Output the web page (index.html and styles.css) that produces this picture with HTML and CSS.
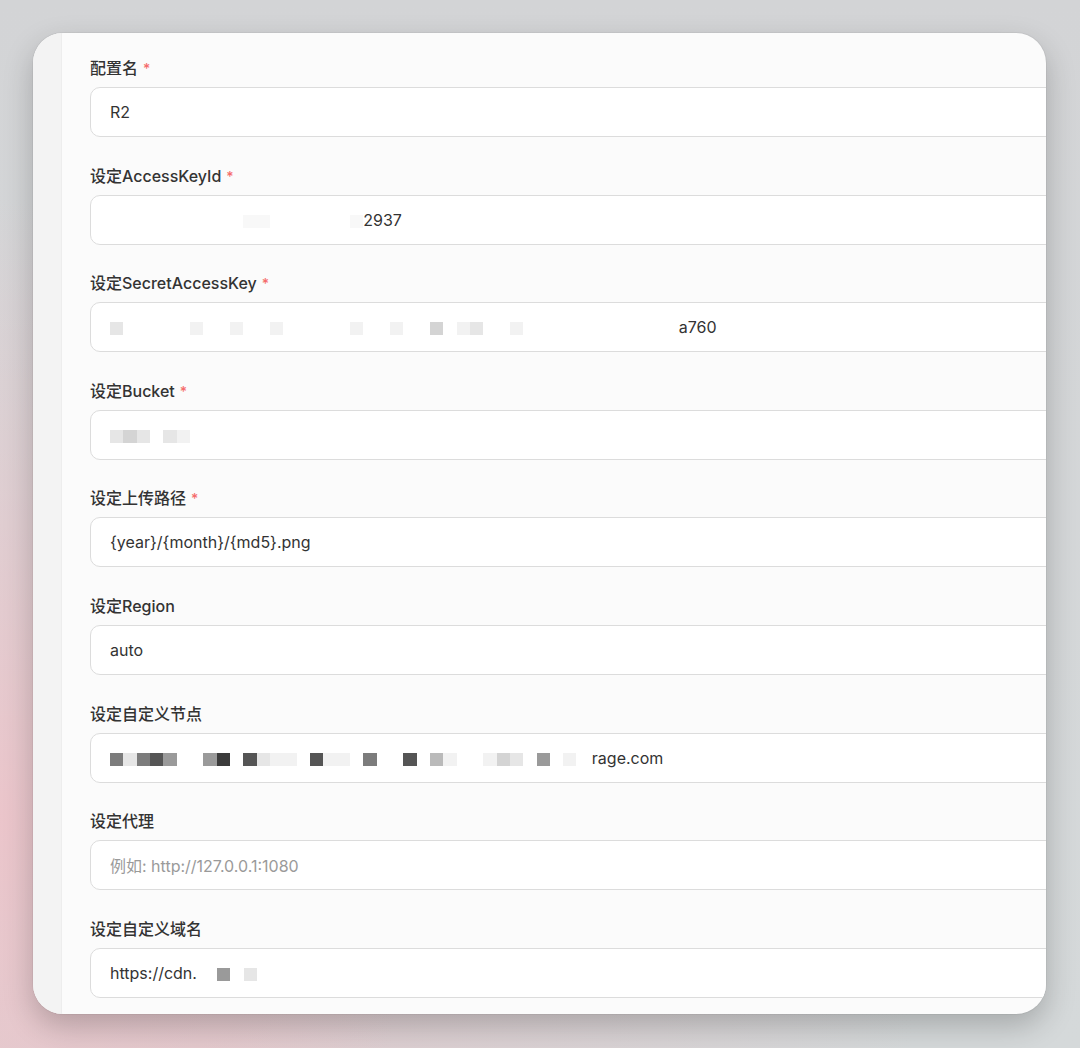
FILE: index.html
```html
<!DOCTYPE html>
<html lang="zh-CN">
<head>
<meta charset="UTF-8" />
<meta name="viewport" content="width=device-width, initial-scale=1" />
<title>R2 配置</title>
<link rel="stylesheet" href="styles.css">
</head>
<body>

<div class="window">
  <div class="sidebar"></div>

  <div class="main">
    <div class="form-item">
      <div class="label">配置名<span class="req">*</span></div>
      <div class="field">R2</div>
    </div>

    <div class="form-item">
      <div class="label">设定AccessKeyId<span class="req">*</span></div>
      <div class="field">
        <span class="mosaic">
          <i></i><i></i><i></i><i></i><i></i><i></i><i></i><i></i><i></i><i></i>
          <i class="c0"></i><i class="c0"></i><i></i><i></i><i></i><i></i><i></i><i></i>
          <i class="c0"></i>
        </span>2937
      </div>
    </div>

    <div class="form-item">
      <div class="label">设定SecretAccessKey<span class="req">*</span></div>
      <div class="field">
        <span class="mosaic">
          <i class="c2"></i><i></i><i></i><i></i><i></i><i></i>
          <i class="c1"></i><i></i><i></i><i class="c1"></i><i></i><i></i>
          <i class="c1"></i><i></i><i></i><i></i><i></i><i></i>
          <i class="c1"></i><i></i><i></i><i class="c1"></i><i></i><i></i>
          <i class="c3"></i><i></i><i class="c1"></i><i class="c2"></i><i></i><i></i>
          <i class="c1"></i><i></i><i></i><i></i><i></i><i></i>
          <i></i><i></i><i></i><i></i><i></i><i></i>
        </span><span class="tail wide">a760</span>
      </div>
    </div>

    <div class="form-item">
      <div class="label">设定Bucket<span class="req">*</span></div>
      <div class="field">
        <span class="mosaic">
          <i class="c2"></i><i class="c3"></i><i class="c2"></i><i></i><i class="c2"></i><i class="c1"></i>
        </span>
      </div>
    </div>

    <div class="form-item">
      <div class="label">设定上传路径<span class="req">*</span></div>
      <div class="field">{year}/{month}/{md5}.png</div>
    </div>

    <div class="form-item">
      <div class="label">设定Region</div>
      <div class="field">auto</div>
    </div>

    <div class="form-item">
      <div class="label">设定自定义节点</div>
      <div class="field">
        <span class="mosaic">
          <i class="c6"></i><i class="c2"></i><i class="c6"></i><i class="c7"></i><i class="c5"></i><i></i>
          <i></i><i class="c5"></i><i class="c8"></i><i></i><i class="c7"></i><i class="c2"></i>
          <i class="c1"></i><i class="c1"></i><i></i><i class="c7"></i><i class="c1"></i><i class="c1"></i>
          <i></i><i class="c6"></i><i></i><i></i><i class="c7"></i><i></i>
          <i class="c4"></i><i class="c1"></i><i></i><i></i><i class="c1"></i><i class="c3"></i>
          <i class="c2"></i><i></i><i class="c5"></i><i></i><i class="c1"></i><i></i>
        </span><span class="tail">rage.com</span>
      </div>
    </div>

    <div class="form-item">
      <div class="label">设定代理</div>
      <div class="field"><span class="placeholder">例如: http://127.0.0.1:1080</span></div>
    </div>

    <div class="form-item">
      <div class="label">设定自定义域名</div>
      <div class="field">
        https://cdn.<span class="mosaic after">
          <i class="c5"></i><i></i><i class="c2"></i>
        </span>
      </div>
    </div>
  </div>
</div>

</body>
</html>
```

FILE: styles.css
```css
html, body {
  margin: 0;
  padding: 0;
  height: 100%;
}

body {
  padding: 33px 34px 34px 33px;
  box-sizing: border-box;
  overflow: hidden;
  font-family: "Inter", "Noto Sans CJK SC", sans-serif;
  background:
    radial-gradient(ellipse 420px 620px at 0% 78%, rgba(236, 196, 202, 0.95) 0%, rgba(236, 196, 202, 0) 100%),
    radial-gradient(ellipse 700px 300px at 20% 100%, rgba(226, 200, 204, 0.8) 0%, rgba(226, 200, 204, 0) 100%),
    linear-gradient(180deg, #d3d4d6 0%, #d5d9da 100%);
}

.window {
  height: 981px;
  width: 1013px;
  display: flex;
  border-radius: 30px;
  overflow: hidden;
  background: #fbfbfb;
  box-shadow: 0 12px 30px rgba(0, 0, 0, 0.22), 0 0 0 1px rgba(0, 0, 0, 0.04);
}

.sidebar {
  width: 28px;
  flex-shrink: 0;
  background: #f3f3f3;
  border-right: 1px solid #ededed;
}

.main {
  flex: 1;
  padding: 24px 0 0 28px;
  overflow: hidden;
}

.form-item {
  margin-bottom: 27.6px;
}

.label {
  height: 22px;
  font-size: 16px;
  line-height: 22px;
  font-weight: 500;
  color: #333;
  margin-bottom: 8px;
  white-space: nowrap;
}

.req {
  color: #f56c6c;
  font-size: 14px;
  margin-left: 5px;
}

.field {
  width: 1000px;
  height: 50px;
  box-sizing: border-box;
  background: #fff;
  border: 1px solid #dcdcdc;
  border-radius: 10px;
  padding: 0 19px;
  display: flex;
  align-items: center;
  font-size: 16px;
  color: #333;
  white-space: nowrap;
}

.placeholder {
  color: #9a9a9a;
}

.mosaic {
  display: inline-flex;
  margin-top: 3px;
}

.mosaic.after {
  margin-left: 20px;
}

.mosaic i {
  width: 13.33px;
  height: 13px;
  background: transparent;
}

.mosaic i.c0 { background: #f8f8f8; }
.mosaic i.c1 { background: #f2f2f2; }
.mosaic i.c2 { background: #e6e6e6; }
.mosaic i.c3 { background: #d4d4d4; }
.mosaic i.c4 { background: #bababa; }
.mosaic i.c5 { background: #9a9a9a; }
.mosaic i.c6 { background: #7c7c7c; }
.mosaic i.c7 { background: #555; }
.mosaic i.c8 { background: #3b3b3b; }

.tail {
  margin-left: 2px;
}

.tail.wide {
  margin-left: 9px;
}
```
